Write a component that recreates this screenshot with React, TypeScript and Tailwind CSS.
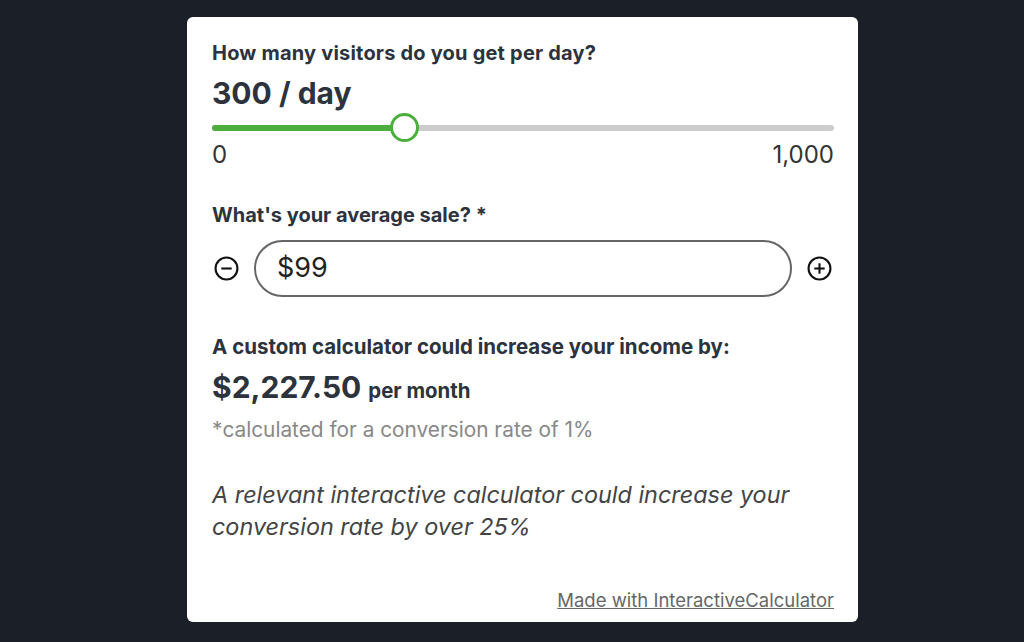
import React from "react";

function MinusIcon() {
  return (
    <svg width="25" height="25" viewBox="0 0 24 24" fill="none" stroke="#111" strokeWidth="2">
      <circle cx="12" cy="12" r="10.5" />
      <line x1="7" y1="12" x2="17" y2="12" />
    </svg>
  );
}
function PlusIcon() {
  return (
    <svg width="25" height="25" viewBox="0 0 24 24" fill="none" stroke="#111" strokeWidth="2">
      <circle cx="12" cy="12" r="10.5" />
      <line x1="7" y1="12" x2="17" y2="12" />
      <line x1="12" y1="7" x2="12" y2="17" />
    </svg>
  );
}

export default function App() {
  const pct = 0.3;
  return (
    <div
      className="min-h-[642px] w-full bg-[#1b1f27] flex pl-[187px] pt-[17px]"
      style={{ fontFamily: "Inter, 'Open Sans', sans-serif" }}
    >
      <div className="w-[671px] h-[605px] bg-white rounded-[6px] pl-[25px] pr-[24px] pt-[22px] flex flex-col">
        <div className="text-[20px] font-bold text-[#2d333d] leading-[28px] tracking-[0.2px]">
          How many visitors do you get per day?
        </div>
        <div className="text-[30px] font-bold text-[#2d333d] leading-[40px] mt-[6px]">300 / day</div>
        <div className="relative h-[30px]">
          <div className="absolute left-0 right-0 top-[12px] h-[6px] rounded-full bg-[#cccccc]" />
          <div
            className="absolute left-0 top-[12px] h-[6px] rounded-full bg-[#4caf3d]"
            style={{ width: `calc(14px + ${pct} * (100% - 28px))` }}
          />
          <div
            className="absolute top-[0px] w-[29px] h-[29px] rounded-full bg-white border-[3px] border-[#4caf3d]"
            style={{ left: `calc(${pct} * (100% - 28px))` }}
          />
        </div>
        <div className="flex justify-between text-[24px] text-[#333] leading-[28px] -mt-[2px]">
          <span>0</span>
          <span>1,000</span>
        </div>
        <div className="text-[20px] font-bold text-[#2d333d] leading-[28px] mt-[32px]">
          What's your average sale? *
        </div>
        <div className="flex items-center gap-[15px] mt-[11px] pl-[2px] pr-[2px]">
          <MinusIcon />
          <div className="flex-1 h-[57px] rounded-full border-2 border-[#666] flex items-center pl-[21px] text-[27px] text-[#222]">
            $99
          </div>
          <PlusIcon />
        </div>
        <div className="text-[20.5px] font-bold text-[#2d333d] leading-[28px] mt-[36px]">
          A custom calculator could increase your income by:
        </div>
        <div className="flex items-baseline gap-[7px] mt-[6px] text-[#2d333d] leading-[40px]">
          <span className="text-[30px] font-bold">$2,227.50</span>
          <span className="text-[20.4px] font-bold">per month</span>
        </div>
        <div className="text-[20.8px] text-[#888] leading-[28px] mt-[5px]">
          *calculated for a conversion rate of 1%
        </div>
        <div className="text-[23.4px] italic text-[#444] leading-[32px] mt-[35px] w-[610px]">
          A relevant interactive calculator could increase your conversion rate by over 25%
        </div>
        <div className="mt-auto mb-[9px] text-right leading-[24px]">
          <span className="text-[18.5px] text-[#666] underline">Made with InteractiveCalculator</span>
        </div>
      </div>
    </div>
  );
}
